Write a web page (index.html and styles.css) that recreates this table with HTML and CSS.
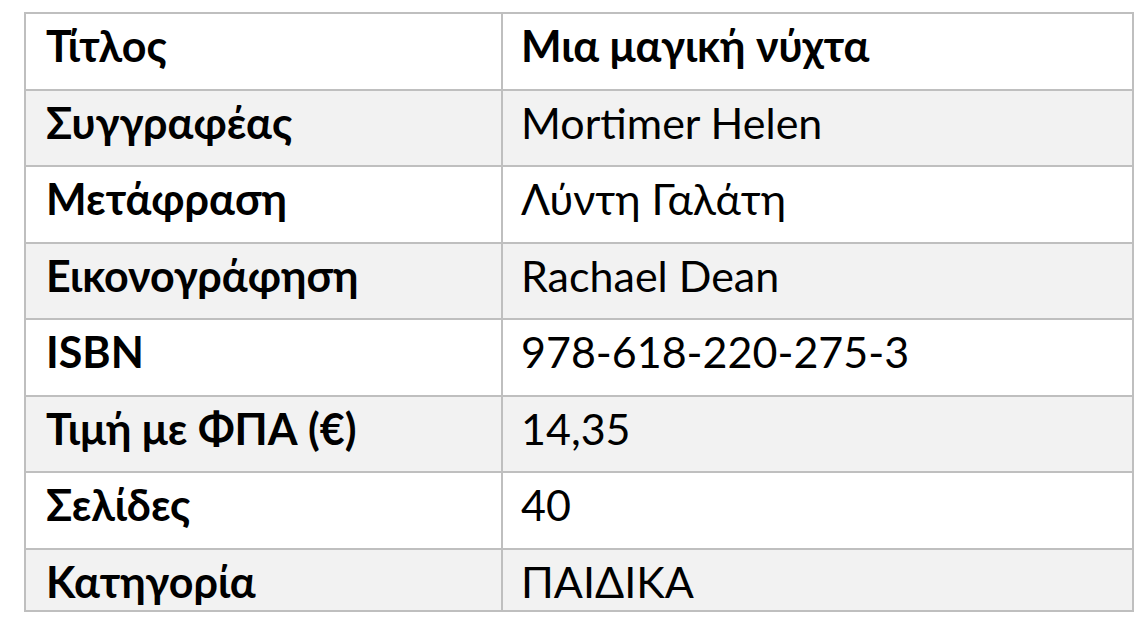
FILE: index.html
```html
<!DOCTYPE html>
<html lang="el">
<head>
<meta charset="utf-8">
<title>Μια μαγική νύχτα</title>
<link rel="stylesheet" href="styles.css">
</head>
<body>
<table class="info">
  <tbody>
    <tr class="row"><th class="label">Τίτλος</th><td class="value value-bold">Μια μαγική νύχτα</td></tr>
    <tr class="row alt"><th class="label">Συγγραφέας</th><td class="value">Mortimer Helen</td></tr>
    <tr class="row"><th class="label">Μετάφραση</th><td class="value">Λύντη Γαλάτη</td></tr>
    <tr class="row alt"><th class="label">Εικονογράφηση</th><td class="value">Rachael Dean</td></tr>
    <tr class="row"><th class="label">ISBN</th><td class="value">978-618-220-275-3</td></tr>
    <tr class="row alt"><th class="label">Τιμή με ΦΠΑ (€)</th><td class="value">14,35</td></tr>
    <tr class="row"><th class="label">Σελίδες</th><td class="value">40</td></tr>
    <tr class="row alt last"><th class="label">Κατηγορία</th><td class="value">ΠΑΙΔΙΚΑ</td></tr>
  </tbody>
</table>
</body>
</html>
```
FILE: styles.css
```css
html, body {
  margin: 0;
  padding: 0;
  background: #ffffff;
}
body {
  padding: 12px 0 0 24px;
  font-family: Lato, "Open Sans", "Noto Sans", sans-serif;
  color: #000000;
}
.info {
  border-collapse: collapse;
  width: 1110px;
  table-layout: fixed;
}
.row {
  height: 76.5px;
}
.row.last {
  height: 62px;
}
.alt {
  background: #f2f2f2;
}
.label, .value {
  border: 2px solid #bfbfbf;
  text-align: left;
  vertical-align: top;
  padding: 6px 16px 0 20px;
  font-size: 43px;
  line-height: 52px;
  white-space: nowrap;
}
.label {
  width: 439px;
  font-weight: 700;
}
.value {
  padding-left: 18px;
  font-weight: 400;
}
.value-bold {
  font-weight: 700;
}
```
